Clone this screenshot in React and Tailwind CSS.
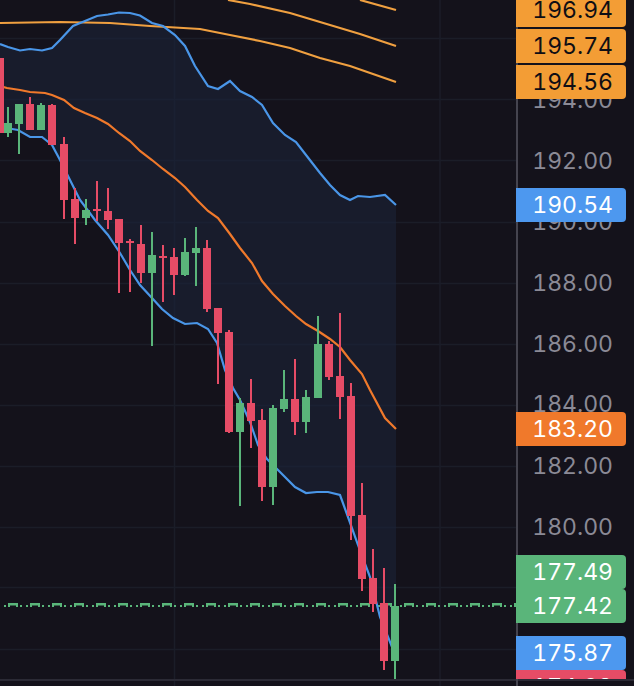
const candles = [
  [0, 58, 133, 58, 133, 'r'],
  [8, 107, 137, 123, 133, 'g'],
  [19, 104, 154, 104, 124, 'g'],
  [30, 97, 130, 104, 130, 'r'],
  [41, 103, 130, 105, 130, 'g'],
  [52, 104, 145, 105, 145, 'r'],
  [64, 137, 219, 144, 200, 'r'],
  [75, 188, 244, 199, 218, 'r'],
  [86, 199, 225, 210, 218, 'g'],
  [97, 181, 221, 209, 211, 'r'],
  [108, 188, 229, 211, 220, 'r'],
  [119, 219, 293, 219, 243, 'r'],
  [130, 239, 292, 241, 243, 'r'],
  [141, 225, 283, 244, 273, 'r'],
  [152, 232, 346, 255, 273, 'g'],
  [163, 245, 302, 256, 258, 'r'],
  [174, 248, 295, 257, 275, 'r'],
  [185, 238, 276, 252, 275, 'g'],
  [196, 227, 286, 248, 253, 'g'],
  [207, 240, 312, 248, 309, 'r'],
  [218, 308, 384, 308, 333, 'r'],
  [229, 330, 433, 332, 432, 'r'],
  [240, 398, 506, 403, 432, 'g'],
  [251, 379, 448, 403, 421, 'r'],
  [262, 409, 501, 420, 487, 'r'],
  [273, 405, 505, 408, 487, 'g'],
  [284, 370, 412, 399, 409, 'g'],
  [295, 359, 435, 399, 422, 'r'],
  [306, 390, 433, 397, 422, 'g'],
  [318, 316, 398, 344, 398, 'g'],
  [329, 341, 380, 344, 377, 'r'],
  [340, 313, 419, 376, 397, 'r'],
  [351, 383, 540, 396, 516, 'r'],
  [362, 483, 591, 515, 579, 'r'],
  [373, 549, 612, 578, 604, 'r'],
  [384, 568, 670, 603, 661, 'r'],
  [395, 584, 679, 606, 661, 'g'],
];

const upper = [[0,44],[8,47],[20,50.5],[30,49],[42,50.5],[52,48],[60,40],[73,26],[85,21],[97,16],[108,14.5],[119,12.5],[130,13],[140,15.5],[152,23],[163,26],[175,35],[185,46],[195,66],[208,86],[218,89],[230,81],[240,91],[252,97],[262,105],[273,123],[285,135],[296,142],[306,155],[320,173],[330,185],[340,195],[350,200],[358,196],[370,197],[385,195],[396,205]];
const lower = [[0,127],[18,130],[30,137],[42,137],[52,145],[60,160],[70,180],[80,200],[95,220],[108,235],[120,253],[130,270],[140,285],[152,298],[162,309],[173,318],[185,324],[197,323],[208,329],[217,343],[225,370],[233,388],[240,400],[250,422],[258,445],[267,459],[278,470],[295,487],[306,493],[317,492],[328,492],[340,495],[348,517],[358,545],[370,577],[380,617],[392,647],[396,652]];
const mid = [[0,86],[7,88],[20,90],[30,92],[45,93],[52,95],[64,100],[74,108],[85,113],[97,118],[108,124],[119,133],[130,141],[140,151],[152,160],[163,169],[175,178],[185,187],[197,200],[208,211],[218,218],[230,234],[240,248],[252,263],[262,281],[273,294],[285,306],[296,316],[306,324],[318,331],[330,339],[340,347],[350,360],[362,374],[370,390],[385,418],[396,429]];
const ma1 = [[0,23],[60,22],[110,23],[150,26],[200,29],[230,35],[260,41],[290,48],[320,58],[350,66],[396,82]];
const ma2 = [[228,0],[250,4],[290,13],[320,22],[360,34],[396,46]];
const ma3 = [[360,0],[396,10]];

const pts = (a) => a.map((p) => p.join(',')).join(' ');
const band = pts([...upper, ...[...lower].reverse()]);
const gridY = [38.5, 99.5, 160.5, 222.5, 283.5, 344.5, 405.5, 466.5, 527.5, 587.5, 649.5];
const dashes = Array.from({ length: 25 }, (_, i) => i * 22 - 14);

function Chart() {
  return (
    <svg width="516" height="686" viewBox="0 0 516 686" className="block">
      {gridY.map((y) => (
        <line key={y} x1="0" x2="516" y1={y} y2={y} stroke="#1b1d28" strokeWidth="1.5" />
      ))}
      <line x1="174.5" x2="174.5" y1="0" y2="686" stroke="#1b1d28" strokeWidth="1.5" />
      <line x1="440" x2="440" y1="0" y2="686" stroke="#1b1d28" strokeWidth="1.5" />
      <polygon points={band} fill="#1b2338" fillOpacity="0.6" />
      {dashes.map((x) => (
        <g key={x} fill="#5ab57a">
          <rect x={x} y="603" width="10" height="2.5" />
          <rect x={x} y="605" width="2" height="2" />
          <rect x={x + 8} y="605" width="2" height="2" />
          <rect x={x + 12} y="605" width="2" height="2" />
          <rect x={x + 18} y="605" width="2" height="2" />
        </g>
      ))}
      <polyline points={pts(ma1)} fill="none" stroke="#f0a040" strokeWidth="2.2" />
      <polyline points={pts(ma2)} fill="none" stroke="#f0a040" strokeWidth="2.2" />
      <polyline points={pts(ma3)} fill="none" stroke="#f0a040" strokeWidth="2.2" />
      <polyline points={pts(upper)} fill="none" stroke="#4a96e8" strokeWidth="2.2" />
      <polyline points={pts(lower)} fill="none" stroke="#4a96e8" strokeWidth="2.2" />
      <polyline points={pts(mid)} fill="none" stroke="#f0792b" strokeWidth="2.2" />
      {candles.map(([x, wt, wb, bt, bb, c]) => {
        const color = c === 'g' ? '#5ab57a' : '#e64c66';
        return (
          <g key={x} fill={color}>
            <rect x={x - 1} y={wt} width="2" height={wb - wt} />
            <rect x={x - 4} y={bt} width="8" height={bb - bt} />
          </g>
        );
      })}
      <rect x="0" y="679" width="516" height="2" fill="#2b2a35" />
    </svg>
  );
}

const ticks = [
  ['194.00', 100], ['192.00', 161], ['190.00', 222], ['188.00', 283], ['186.00', 344],
  ['184.00', 404], ['182.00', 466], ['180.00', 527],
];

const tags = [
  ['196.94', -7, 'bg-[#f39d35]', 'text-[#0f0e14]'],
  ['195.74', 29, 'bg-[#f39d35]', 'text-[#0f0e14]'],
  ['194.56', 65, 'bg-[#f39d35]', 'text-[#0f0e14]'],
  ['190.54', 188, 'bg-[#4d98ef]', 'text-white'],
  ['183.20', 412, 'bg-[#f0792b]', 'text-white'],
  ['177.49', 555, 'bg-[#5ab57a]', 'text-white'],
  ['177.42', 589, 'bg-[#5ab57a]', 'text-white'],
  ['175.87', 636, 'bg-[#4d98ef]', 'text-white'],
  ['174.03', 670, 'bg-[#e64c66]', 'text-white'],
];

export default function App() {
  return (
    <div className="flex w-[634px] h-[686px] overflow-hidden bg-[#14121b] font-['Inter',sans-serif]">
      <div className="w-[516px] shrink-0">
        <Chart />
      </div>
      <div className="relative flex-1 border-l-2 border-[#45444f]">
        <div className="absolute left-[-2px] right-0 top-0 h-[679px] overflow-hidden">
          {ticks.map(([t, y]) => (
            <div
              key={t}
              style={{ top: y - 17 }}
              className="absolute left-0 w-[110px] h-[34px] pr-[13px] flex items-center justify-end text-[23px] tabular-nums text-[#8b8a96]"
            >
              {t}
            </div>
          ))}
          {tags.map(([t, y, bg, fg]) => (
            <div
              key={t}
              style={{ top: y }}
              className={`absolute left-0 w-[110px] h-[34px] pr-[13px] flex items-center justify-end rounded-r-[4px] text-[23px] tabular-nums ${bg} ${fg}`}
            >
              {t}
            </div>
          ))}
        </div>
        <div className="absolute left-0 right-0 top-[679px] h-[2px] bg-[#2b2a35]" />
      </div>
    </div>
  );
}
